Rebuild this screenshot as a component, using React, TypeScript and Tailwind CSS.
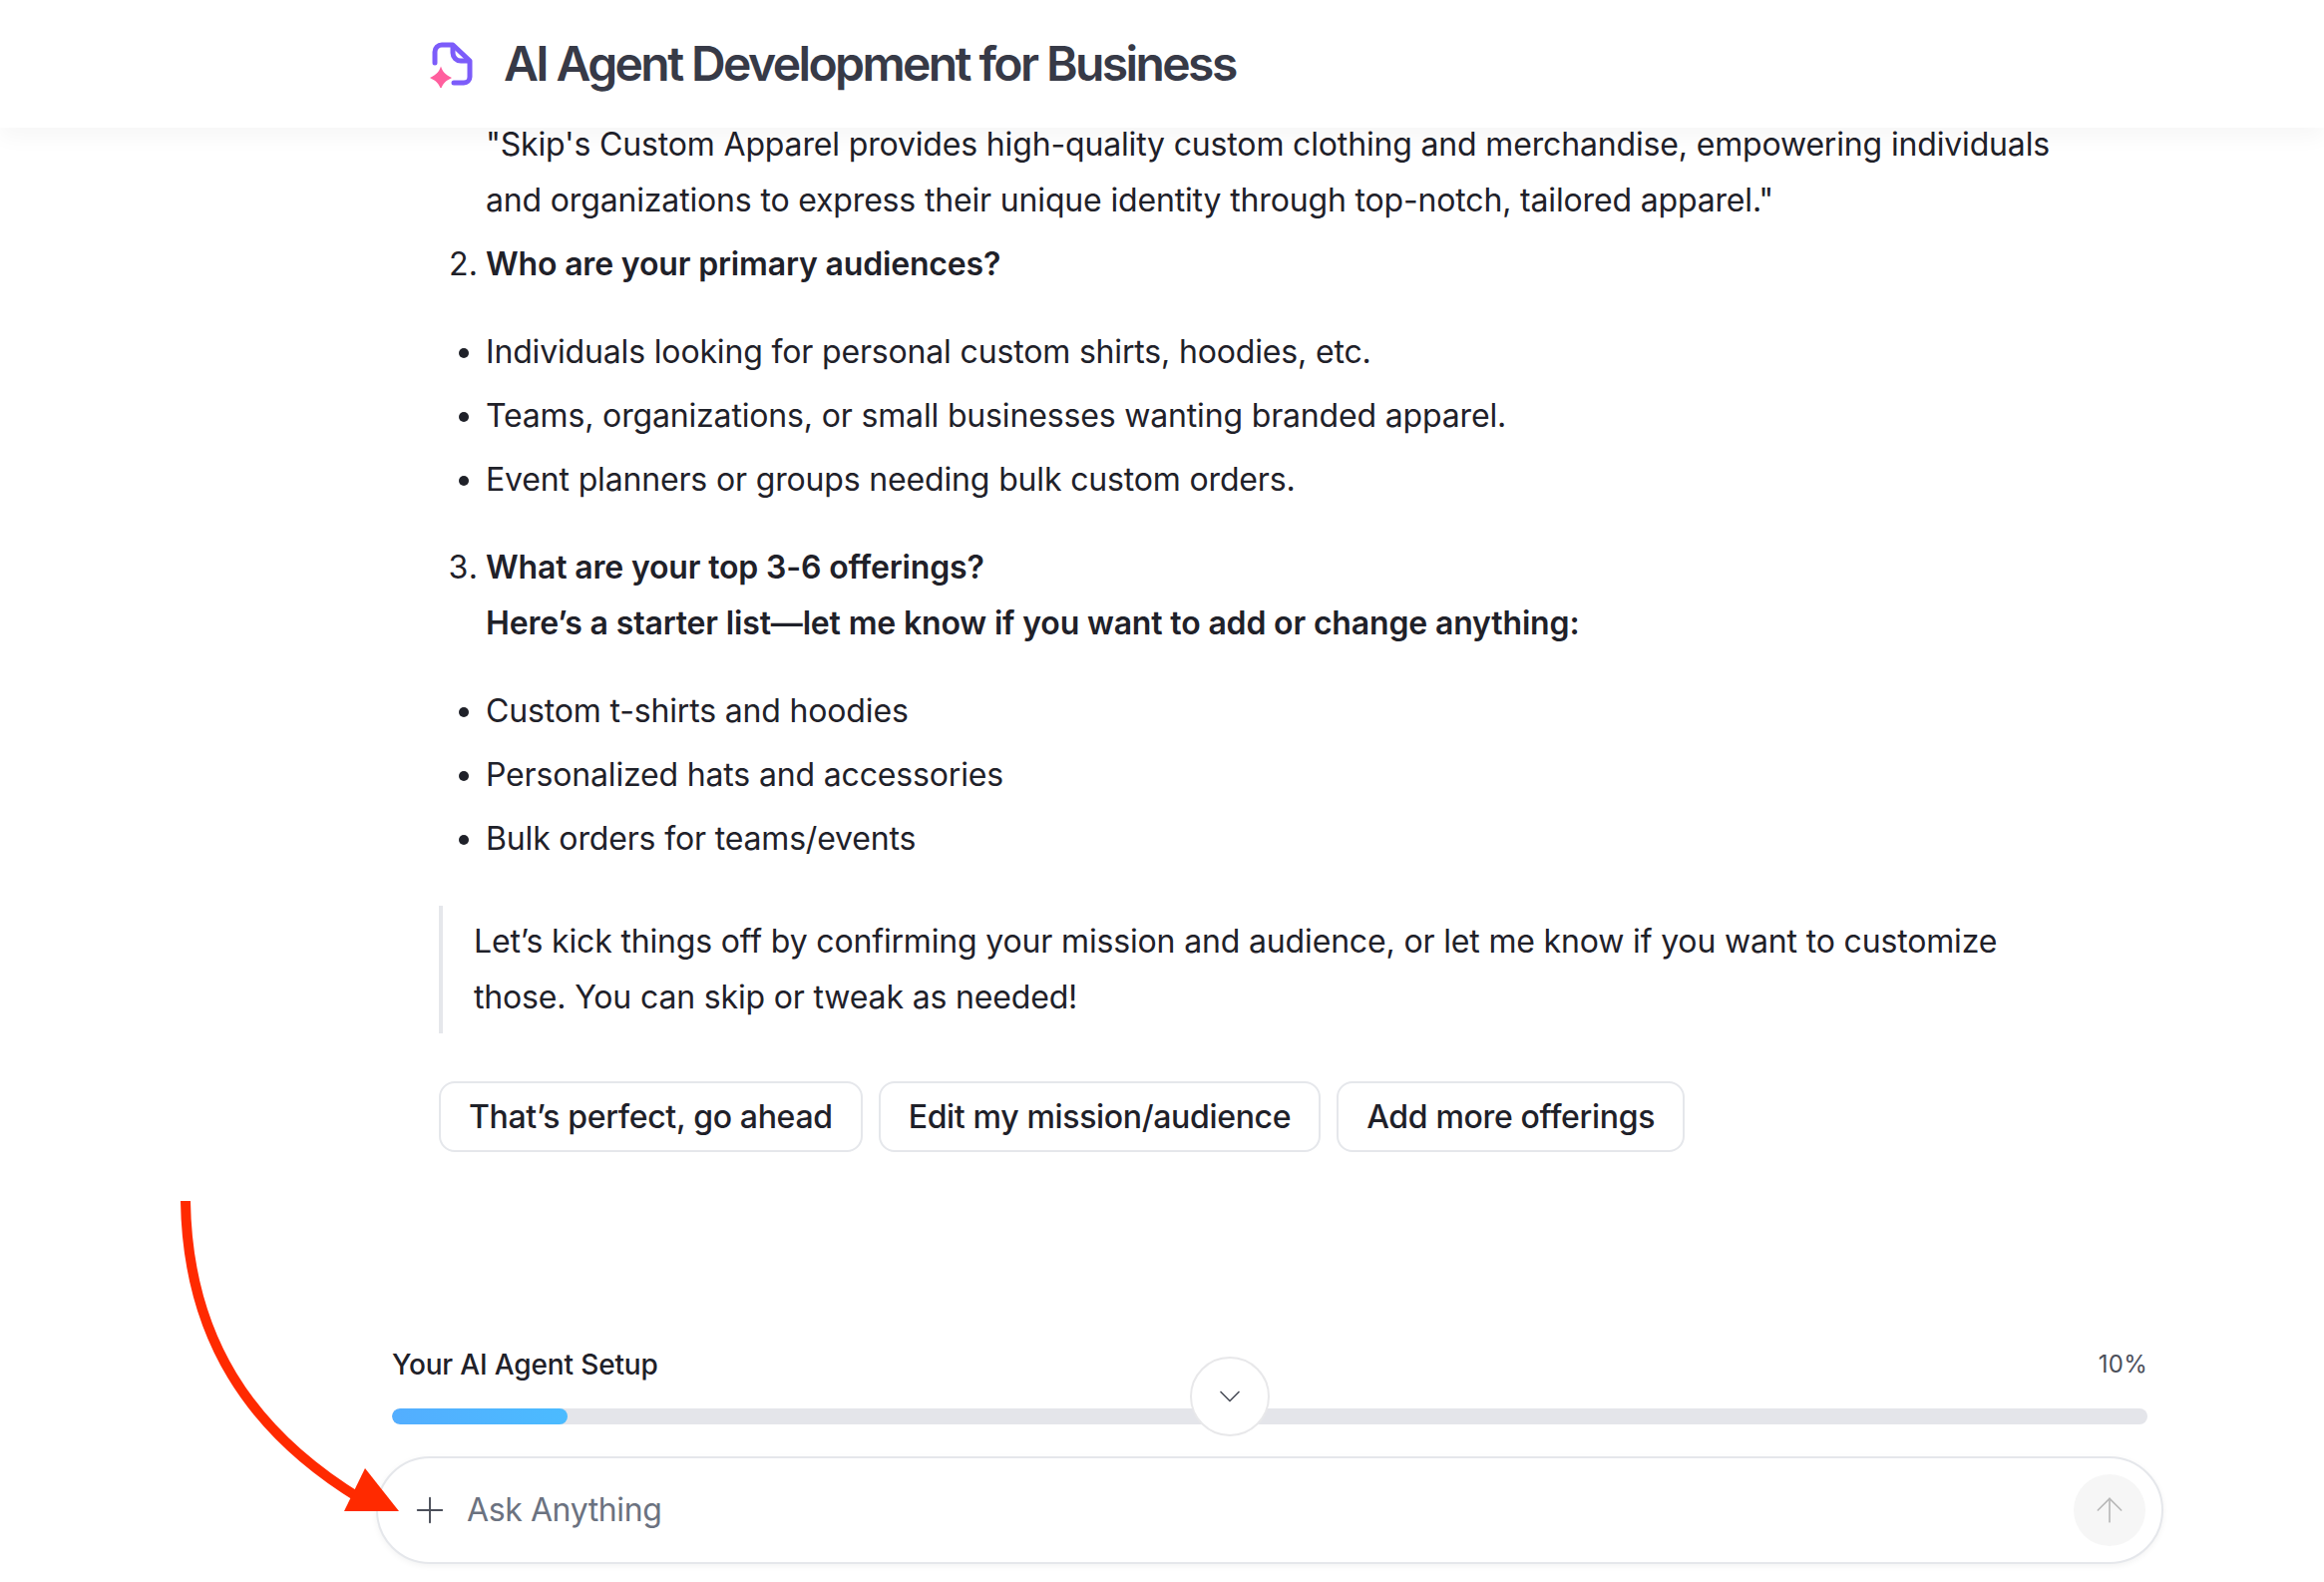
import React from 'react';
import { ChevronDown, Plus, ArrowUp } from 'lucide-react';

const FONT = "font-['Inter','Noto_Sans',sans-serif]";

const Bullets: React.FC<{ items: string[] }> = ({ items }) => (
  <ul className="list-disc pl-[47px] mt-8 flex flex-col gap-2">
    {items.map((t) => (
      <li key={t}>{t}</li>
    ))}
  </ul>
);

const App: React.FC = () => {
  const replies = ["That’s perfect, go ahead", 'Edit my mission/audience', 'Add more offerings'];

  return (
    <div className={`relative w-[2330px] h-[1586px] overflow-hidden bg-white flex flex-col ${FONT} text-[#1f2129]`}>
      {/* header sits over the scrolled messages */}
      <header className="absolute top-0 left-0 right-0 h-[128px] bg-white z-10 shadow-[0_10px_20px_rgba(0,0,0,0.035)] flex items-center pl-[428px] gap-[29px]">
        <svg width="48" height="48" viewBox="0 0 48 48" fill="none">
          <path
            d="M8 23V12a7 7 0 0 1 7-7h11l17 16v16a6 6 0 0 1-6 6H27"
            stroke="#7c5cfa"
            strokeWidth="5"
            strokeLinecap="round"
            strokeLinejoin="round"
          />
          <path d="M26 5v8a8 8 0 0 0 8 8h9" stroke="#7c5cfa" strokeWidth="5" strokeLinejoin="round" />
          <path d="M14 26.500c2 5.500 4 8 11 11.500-7 3.500-9 6-11 11.500-2-5.500-4-8-11-11.500 7-3.500 9-6 11-11.500z" fill="#ff5f9e" />
        </svg>
        <h1 className="text-[48px] font-semibold tracking-[-0.054em] text-[#373a47]">AI Agent Development for Business</h1>
      </header>

      <main className="flex-1 min-h-0 pt-[117px] pl-[440px] pr-[224px] text-[32px] leading-[56px] tracking-[-0.16px]">
        <p className="pl-[47px]">
          "Skip's Custom Apparel provides high-quality custom clothing and merchandise, empowering individuals and
          organizations to express their unique identity through top-notch, tailored apparel."
        </p>

        <ol start={2} className="list-decimal pl-[47px] mt-2">
          <li className="font-semibold marker:font-normal">Who are your primary audiences?</li>
        </ol>
        <Bullets
          items={[
            'Individuals looking for personal custom shirts, hoodies, etc.',
            'Teams, organizations, or small businesses wanting branded apparel.',
            'Event planners or groups needing bulk custom orders.',
          ]}
        />

        <ol start={3} className="list-decimal pl-[47px] mt-8">
          <li className="font-semibold marker:font-normal">
            What are your top 3-6 offerings?
            <br />
            Here’s a starter list—let me know if you want to add or change anything:
          </li>
        </ol>
        <Bullets items={['Custom t-shirts and hoodies', 'Personalized hats and accessories', 'Bulk orders for teams/events']} />

        <blockquote className="mt-[39px] border-l-4 border-[#e5e7eb] pl-[31px] pr-4 py-2">
          Let’s kick things off by confirming your mission and audience, or let me know if you want to customize those.
          You can skip or tweak as needed!
        </blockquote>

        <div className="mt-[48px] flex gap-4">
          {replies.map((r) => (
            <button
              key={r}
              className="h-[71px] px-[28px] rounded-2xl border-2 border-[#e5e7eb] bg-white font-medium text-[32px] leading-none tracking-[-0.33px]"
            >
              {r}
            </button>
          ))}
        </div>
      </main>

      <footer className="relative pl-[377px] pr-[161px] pb-[18px]">
        <div className="pl-[16px] pr-[16px]">
          <div className="flex items-center justify-between h-[41px]">
            <span className="text-[28px] font-medium tracking-[-0.15px]">Your AI Agent Setup</span>
            <span className="text-[24px] tracking-[0.01em] text-[#4b4f5a]">10%</span>
          </div>
          <div className="mt-[24px] h-4 rounded-full bg-[#e4e5ea] overflow-hidden">
            <div className="h-full w-[176px] rounded-full bg-gradient-to-r from-[#53aeff] to-[#4bbbff]" />
          </div>
        </div>
        <div className="mt-[32px] h-[108px] rounded-[54px] border-2 border-[#e5e7eb] bg-white shadow-[0_2px_6px_rgba(0,0,0,0.05)] flex items-center pl-[31px] pr-[16px]">
          <Plus size={42} strokeWidth={1.1} className="text-[#4b4f5a]" />
          <span className="ml-[16px] flex-1 text-[32px] tracking-[-0.4px] text-[#6b7280]">Ask Anything</span>
          <span className="w-[72px] h-[72px] rounded-full bg-[#f6f6f6] flex items-center justify-center">
            <ArrowUp size={40} strokeWidth={1} className="text-[#b8b8b8]" />
          </span>
        </div>
        {/* scroll-to-bottom button over the bar */}
        <button className="absolute left-[1193px] top-[13px] w-20 h-20 rounded-full border-2 border-[#e8e8ea] bg-white flex items-center justify-center">
          <ChevronDown size={36} strokeWidth={1.1} className="text-[#4b4f5a]" />
        </button>
      </footer>

      {/* red annotation arrow drawn on top of the screenshot */}
      <svg className="absolute left-0 top-0 z-20 pointer-events-none" width="2330" height="1586" fill="none">
        <path d="M186 1204C188 1340 250 1435 362 1503" stroke="#ff2a00" strokeWidth="10" />
        <polygon points="366,1472 345,1515 400,1515" fill="#ff2a00" />
      </svg>
    </div>
  );
};

export default App;
